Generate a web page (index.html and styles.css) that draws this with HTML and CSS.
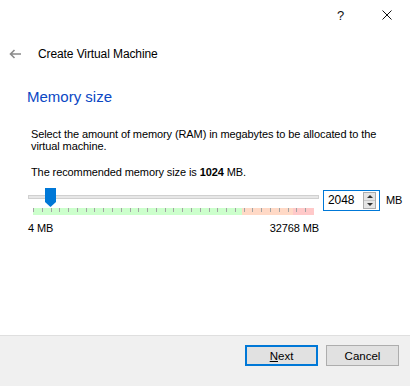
FILE: index.html
```html
<!DOCTYPE html>
<html>
<head>
<meta charset="utf-8">
<link rel="stylesheet" href="styles.css">
</head>
<body>
<div class="window">
  <div class="titlebar">
    <span class="tb-btn help">?</span>
    <span class="tb-btn close">
      <svg width="10" height="10" viewBox="0 0 10 10"><path d="M0.5 0.5 L9.5 9.5 M9.5 0.5 L0.5 9.5" stroke="#111" stroke-width="1" fill="none"/></svg>
    </span>
  </div>
  <div class="header">
    <svg class="back" width="12" height="10" viewBox="0 0 12 10"><path d="M12 5 H1.5 M5.5 1 L1.5 5 L5.5 9" stroke="#8a8a8a" stroke-width="1.6" fill="none"/></svg>
    <span class="title">Create Virtual Machine</span>
  </div>
  <div class="content">
    <h1 class="heading">Memory size</h1>
    <p class="desc">Select the amount of memory (RAM) in megabytes to be allocated to the<br>virtual machine.</p>
    <p class="rec">The recommended memory size is <b>1024</b> MB.</p>
    <div class="slider-row">
      <div class="slider">
        <div class="groove"></div>
        <div class="scale"></div>
        <svg class="handle" width="11" height="19" viewBox="0 0 11 19"><path d="M0 0 H11 V14 L5.5 19 L0 14 Z" fill="#0078d7"/></svg>
      </div>
      <div class="spinbox">
        <span class="spin-value">2048</span>
        <span class="spin-btns">
          <span class="spin-up"></span>
          <span class="spin-down"></span>
        </span>
      </div>
      <span class="unit">MB</span>
    </div>
    <div class="limits">
      <span>4 MB</span>
      <span>32768 MB</span>
    </div>
  </div>
  <div class="footer">
    <button class="btn btn-default"><u>N</u>ext</button>
    <button class="btn">Cancel</button>
  </div>
</div>
</body>
</html>
```
FILE: styles.css
```css
html, body {
  margin: 0;
  padding: 0;
  background: #ffffff;
}
body {
  font-family: "Liberation Sans", Arial, sans-serif;
  font-size: 11px;
  letter-spacing: -0.1px;
  color: #000;
}
.window {
  width: 410px;
  height: 386px;
  display: flex;
  flex-direction: column;
  overflow: hidden;
}
.titlebar {
  height: 30px;
  display: flex;
  justify-content: flex-end;
  align-items: center;
}
.tb-btn {
  display: flex;
  align-items: center;
  justify-content: center;
  height: 30px;
}
.help {
  width: 45px;
  font-size: 13px;
  color: #111;
}
.close {
  width: 47px;
}
.header {
  height: 18px;
  margin-top: 15px;
  display: flex;
  align-items: center;
  padding-left: 9px;
  line-height: 18px;
}
.back {
  margin-right: 17px;
  margin-top: -1px;
}
.title {
  font-size: 12px;
  letter-spacing: -0.1px;
}
.content {
  padding-left: 28px;
}
.heading {
  margin: 24px 0 0 -1px;
  font-size: 15px;
  line-height: 20px;
  font-weight: normal;
  letter-spacing: 0;
  color: #0a47c4;
}
.desc {
  margin: 21px 0 0 3px;
  line-height: 12px;
}
.rec {
  margin: 14px 0 0 3px;
  line-height: 12px;
}
.slider-row {
  margin-top: 10px;
  display: flex;
  align-items: flex-start;
}
.slider {
  position: relative;
  width: 291px;
  height: 27px;
}
.groove {
  margin-top: 7px;
  height: 2px;
  border: 1px solid #d0d0d0;
  background: #e7e7e7;
}
.scale {
  margin: 9px 0 0 5px;
  width: 281px;
  height: 7px;
  background:
    repeating-linear-gradient(to right, #a3a3a3 0 1px, transparent 1px 8.78px) 0 0 / 282px 4px no-repeat,
    linear-gradient(to right, #ccffcc 0 209px, #ffd9c6 209px 260px, #ffc9c9 260px 281px);
}
.handle {
  position: absolute;
  left: 17px;
  top: 0;
}
.spinbox {
  margin: 2px 0 0 4px;
  width: 55px;
  height: 19px;
  border: 1px solid #0078d7;
  display: flex;
  align-items: center;
  justify-content: space-between;
  box-sizing: content-box;
}
.spin-value {
  padding-left: 4px;
  line-height: 19px;
  font-size: 12px;
}
.spin-btns {
  width: 13px;
  height: 17px;
  margin-right: 3px;
  border: 1px solid #adadad;
  background: #e5e5e5;
  display: flex;
  flex-direction: column;
  box-sizing: border-box;
}
.spin-up, .spin-down {
  flex: 1;
  display: flex;
  align-items: center;
  justify-content: center;
}
.spin-up {
  border-bottom: 1px solid #c8c8c8;
}
.spin-up::before {
  content: "";
  border-left: 3px solid transparent;
  border-right: 3px solid transparent;
  border-bottom: 3px solid #333;
}
.spin-down::before {
  content: "";
  border-left: 3px solid transparent;
  border-right: 3px solid transparent;
  border-top: 3px solid #333;
}
.unit {
  margin: 2px 0 0 6px;
  line-height: 21px;
}
.limits {
  margin-top: 6px;
  width: 291px;
  display: flex;
  justify-content: space-between;
  line-height: 14px;
}
.footer {
  margin-top: auto;
  height: 41px;
  border-top: 1px solid #dfdfdf;
  background: #f0f0f0;
  display: flex;
  justify-content: flex-end;
  align-items: flex-start;
  padding: 9px 11px 0 0;
  box-sizing: content-box;
  gap: 8px;
}
.btn {
  width: 73px;
  height: 21px;
  margin: 0;
  padding: 0;
  background: #e1e1e1;
  border: 1px solid #adadad;
  font-family: "Liberation Sans", Arial, sans-serif;
  font-size: 11.5px;
  color: #000;
  box-sizing: border-box;
}
.btn-default {
  border: 2px solid #0078d7;
}
.btn u {
  text-decoration: underline;
}
```
